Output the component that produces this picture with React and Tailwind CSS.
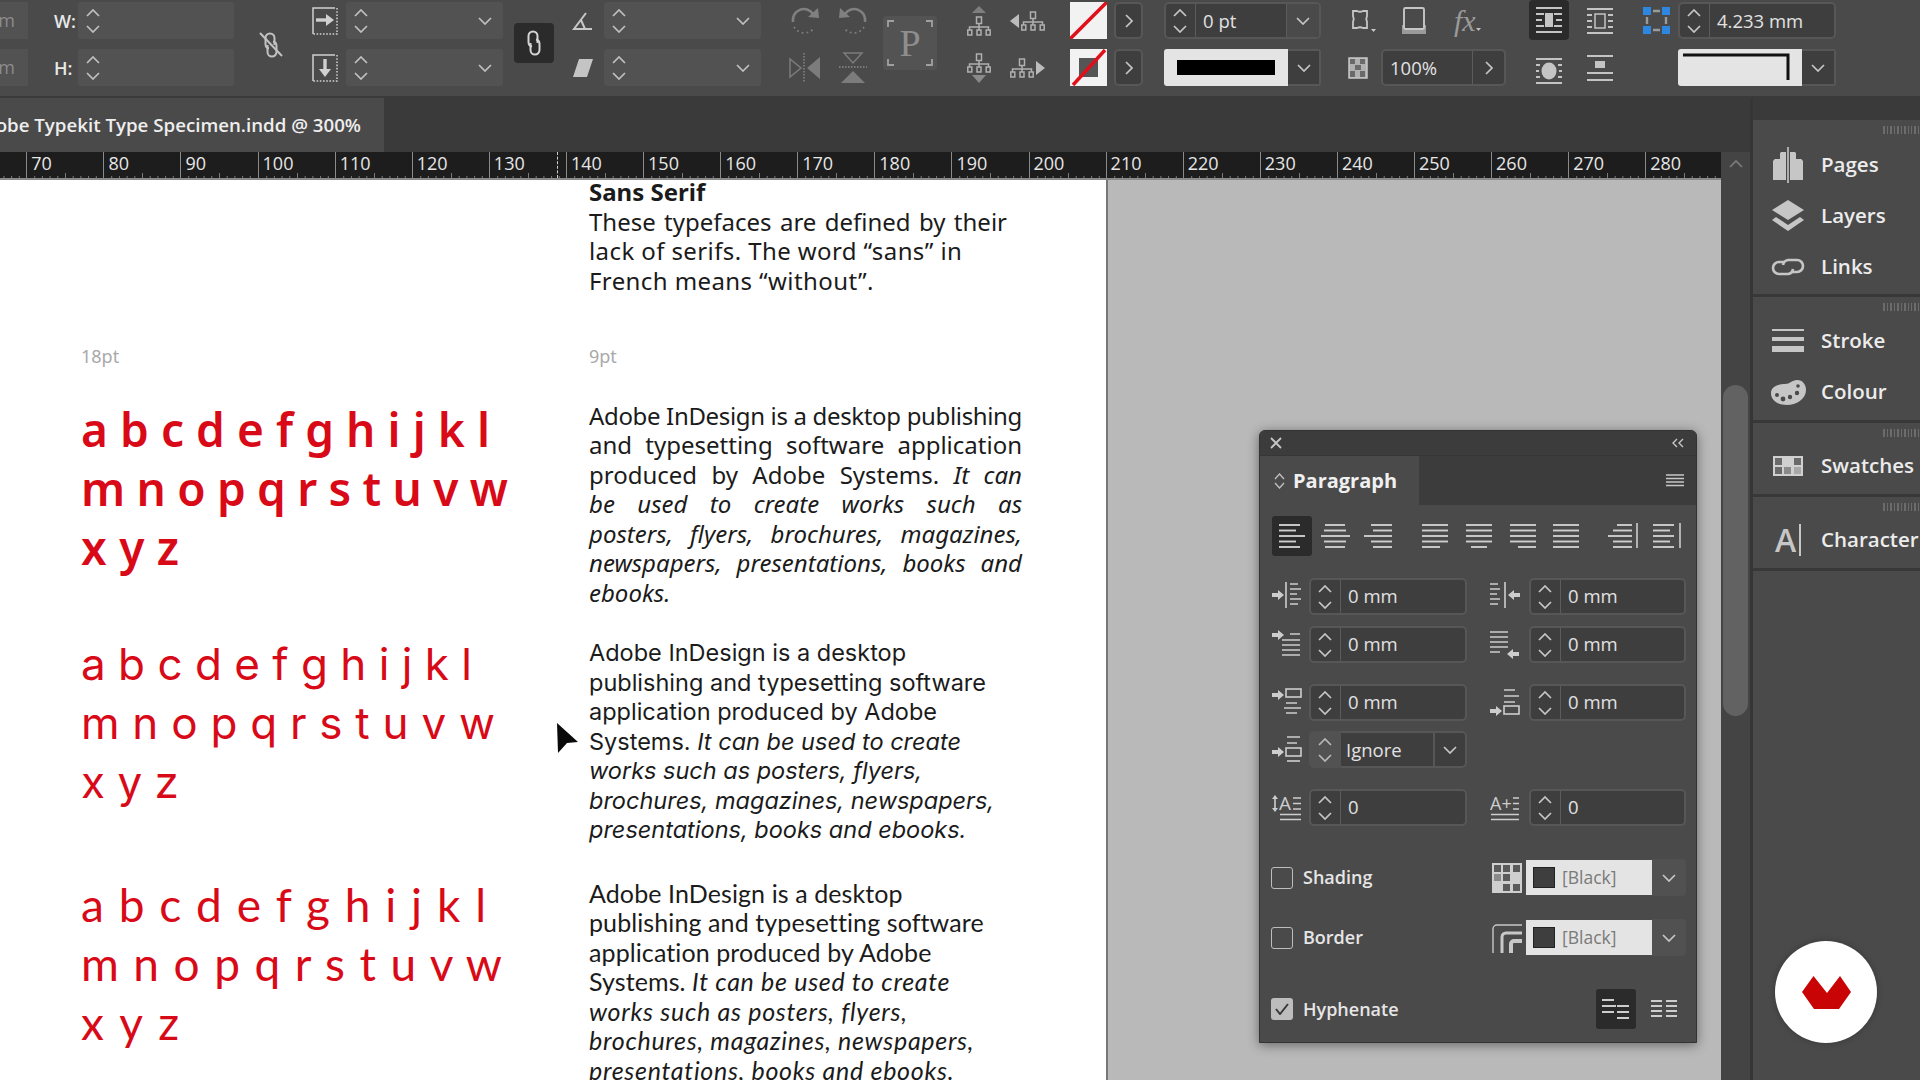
import React from "react";

const C = "#c6c6c6";
const Chev = ({ d = "down", w = 14, h = 8, c = C, sw = 1.7 }) => (
  <svg width={w} height={h} viewBox="0 0 14 8" fill="none" stroke={c} strokeWidth={sw}>
    <path d={d === "up" ? "M1 7 7 1 13 7" : "M1 1 7 7 13 1"} />
  </svg>
);
const ChevR = ({ c = C }) => (
  <svg width="8" height="14" viewBox="0 0 8 14" fill="none" stroke={c} strokeWidth="1.7"><path d="M1 1 7 7 1 13" /></svg>
);
const Stepper = ({ w = "w-[30px] pr-[2px]", c = C, line = false }) => (
  <div className={`${w} h-full shrink-0 flex flex-col items-center justify-center gap-[8px] ${line ? "border-r border-[#5c5c5c]" : ""}`}>
    <Chev d="up" c={c} />
    <Chev c={c} />
  </div>
);
const EmptyField = ({ w, drop = false, c = "#c0c0c0", text }) => (
  <div className={`${w} h-[37px] bg-[#525252] rounded-[3px] flex items-center overflow-hidden`}>
    <Stepper w="w-[30px]" c={c} />
    <div className="flex-1 text-[17px] text-[#ddd]">{text}</div>
    {drop && <div className="w-[36px] flex justify-center"><Chev c={c} /></div>}
  </div>
);
const DarkField = ({ w, value, stepper = true, drop = false, right = false, h = "h-[37px]", text = "text-[18.5px]" }) => (
  <div className={`${w} ${h} bg-[#3e3e3e] border-2 border-[#575757] rounded-[5px] flex items-center overflow-hidden shrink-0`}>
    {stepper && <Stepper line />}
    <div className={`flex-1 pl-[7px] ${text} text-[#e2e2e2] leading-none`}>{value}</div>
    {drop && <div className="w-[33px] h-full border-l border-[#5c5c5c] flex items-center justify-center bg-[#4a4a4a]"><Chev /></div>}
    {right && <div className="w-[32px] h-full border-l border-[#5c5c5c] flex items-center justify-center"><ChevR /></div>}
  </div>
);

/* toolbar drawings */
const chain1 = "M5 16.5C2.5 16 1.5 14 1.5 12V6a4.5 4.5 0 0 1 9 0v7";
const chain2 = "M9 9.5c2.5.5 3.5 2.5 3.5 4.5v6a4.5 4.5 0 0 1-9 0v-7";
const BrokenLink = () => (
  <svg width="24" height="27" viewBox="0 0 24 27" fill="none" stroke="#c2c2c2" strokeWidth="2">
    <g transform="translate(5 1)"><path d={chain1} /><path d={chain2} /></g>
    <path d="M1 2 23 25" strokeWidth="2" />
  </svg>
);
const LinkOn = () => (
  <svg width="14" height="26" viewBox="0 0 14 26" fill="none" stroke="#d4d4d4" strokeWidth="2">
    <path d={chain1} /><path d={chain2} />
  </svg>
);
const ScaleW = () => (
  <svg width="26" height="28" viewBox="0 0 26 28" fill="none" stroke="#d0d0d0" strokeWidth="1.5">
    <path d="M1 27V1h22" />
    <path d="M25 1v26H1" strokeDasharray="1.6 1.6" />
    <path d="M4 13h11" strokeWidth="3.4" /><path d="M14 7l8 6-8 6z" fill="#d0d0d0" stroke="none" />
  </svg>
);
const ScaleH = () => (
  <svg width="26" height="28" viewBox="0 0 26 28" fill="none" stroke="#d0d0d0" strokeWidth="1.5">
    <path d="M1 27V1h22" />
    <path d="M25 1v26H1" strokeDasharray="1.6 1.6" />
    <path d="M13 5v11" strokeWidth="3.4" /><path d="M7 15h12l-6 8z" fill="#d0d0d0" stroke="none" />
  </svg>
);
const Angle = () => (
  <svg width="22" height="20" viewBox="0 0 22 20" fill="none" stroke="#c8c8c8" strokeWidth="2">
    <path d="M14 2 2 18h18M9 9l4 9" />
  </svg>
);
const Shear = () => (
  <svg width="20" height="20" viewBox="0 0 20 20"><path d="M6 1h14l-6 18H0z" fill="#c4c4c4" /></svg>
);
const Rotate = ({ flip }) => (
  <svg width="30" height="30" viewBox="0 0 30 30" fill="none" style={flip ? { transform: "scaleX(-1)" } : undefined}>
    <path d="M3 16A11 11 0 0 1 23 8" stroke="#808080" strokeWidth="2.6" />
    <path d="M18 11 29 12 28 2z" fill="#808080" />
    <path d="M4 21a12 12 0 0 0 20 1" stroke="#7c7c7c" strokeWidth="1.8" strokeDasharray="1.8 3" />
  </svg>
);
const FlipH = () => (
  <svg width="32" height="30" viewBox="0 0 32 30" fill="none">
    <path d="M1 6 12 15 1 24z" stroke="#7c7c7c" strokeWidth="1.5" />
    <path d="M31 4 18 15 31 26z" fill="#7c7c7c" />
    <path d="M15 0v30" stroke="#8a8a8a" strokeWidth="1.4" strokeDasharray="1.5 1.5" />
  </svg>
);
const FlipV = () => (
  <svg width="30" height="32" viewBox="0 0 30 32" fill="none">
    <path d="M6 1h18L15 11z" stroke="#7c7c7c" strokeWidth="1.5" />
    <path d="M3 31h24L15 19z" fill="#7c7c7c" />
    <path d="M1 15h28" stroke="#8a8a8a" strokeWidth="1.4" strokeDasharray="1.5 1.5" />
  </svg>
);
const TreeG = ({ x = 0, y = 0 }) => (
  <g transform={`translate(${x} ${y})`} stroke="#b0b0b0" strokeWidth="1.5" fill="none">
    <rect x="9.5" y="1" width="5" height="6.5" />
    <path d="M12 7.5V14M2.5 14v-3h19v3" />
    <rect x="0.8" y="14" width="4" height="5" /><rect x="10" y="14" width="4" height="5" /><rect x="19.2" y="14" width="4" height="5" />
  </g>
);
const TreeUp = () => (
  <svg width="24" height="30" viewBox="0 0 24 30"><path d="M5 7 12 0l7 7z" fill="#7e7e7e" /><TreeG y={10} /></svg>
);
const TreeDown = () => (
  <svg width="24" height="30" viewBox="0 0 24 30"><TreeG /><path d="M5 22h14l-7 8z" fill="#8a8a8a" /></svg>
);
const TreeLeft = () => (
  <svg width="36" height="20" viewBox="0 0 36 20"><path d="M0 10 9 3v14z" fill="#bcbcbc" /><TreeG x={11} /></svg>
);
const TreeRight = () => (
  <svg width="36" height="20" viewBox="0 0 36 20"><TreeG /><path d="M35 10 26 3v14z" fill="#bcbcbc" /></svg>
);
const SwatchNone = () => (
  <svg width="37" height="37" viewBox="0 0 37 37">
    <rect width="37" height="37" fill="#f2f2f2" />
    <path d="M0 37 37 0" stroke="#e0101a" strokeWidth="3.5" />
  </svg>
);
const SwatchStroke = () => (
  <svg width="37" height="37" viewBox="0 0 37 37">
    <rect width="37" height="37" fill="#f2f2f2" />
    <rect x="9" y="9" width="19" height="19" fill="#555" />
    <path d="M3 36 35 1" stroke="#e0101a" strokeWidth="3.5" />
  </svg>
);
const FrameFit = () => (
  <svg width="28" height="26" viewBox="0 0 28 26" fill="none" stroke="#c6c6c6" strokeWidth="1.8">
    <path d="M5 3h4c2 1 4 1 6 0h4v5c-1 2-1 4 0 6v6h-4c-2-1-4-1-6 0H5v-6c1-2 1-4 0-6V3z" />
    <path d="M23 21h5l-2.5 3z" fill="#c6c6c6" stroke="none" />
  </svg>
);
const DropShadow = () => (
  <svg width="26" height="30" viewBox="0 0 26 30" fill="none">
    <rect x="0" y="19" width="24" height="9" fill="#9a9a9a" />
    <rect x="2" y="2" width="20" height="21" rx="1.5" fill="#4a4a4a" stroke="#c6c6c6" strokeWidth="1.9" />
  </svg>
);
const Opacity = () => (
  <svg width="20" height="22" viewBox="0 0 20 22">
    <rect x="1" y="1" width="18" height="20" fill="#b0b0b0" stroke="#c6c6c6" strokeWidth="1.5" />
    <path d="M2 2h5v5H2zM12 2h5v5h-5zM7 8h6v5H7zM2 14h5v6H2zM12 14h5v6h-5z" fill="#6a6a6a" />
  </svg>
);
const Wrap = ({ kind }) => (
  <svg width="28" height="28" viewBox="0 0 28 28" fill="none" stroke="#c4c4c4" strokeWidth="2">
    {kind === "a" && (
      <>
        <path d="M1 2h26M1 26h26M1 8h8M19 8h8M1 14h6M21 14h6M1 20h8M19 20h8" />
        <rect x="10" y="7" width="8" height="14" fill="#c4c4c4" stroke="none" />
      </>
    )}
    {kind === "b" && (
      <>
        <path d="M1 2h26M1 26h26M1 8h5M22 8h5M1 14h5M22 14h5M1 20h5M22 20h5" />
        <rect x="9" y="7" width="10" height="14" strokeWidth="1.5" />
      </>
    )}
    {kind === "c" && (
      <>
        <path d="M1 2h26M1 26h26M1 8h4M23 8h4M1 14h3M24 14h3M1 20h4M23 20h4" />
        <ellipse cx="14" cy="14" rx="7.5" ry="8.5" fill="#c4c4c4" stroke="none" />
      </>
    )}
    {kind === "d" && (
      <>
        <path d="M1 2h26M1 19h26M1 26h26" />
        <rect x="9" y="7" width="10" height="7" fill="#c4c4c4" stroke="none" />
      </>
    )}
  </svg>
);
const BlueBox = () => (
  <svg width="27" height="27" viewBox="0 0 27 27">
    <path d="M10 4h7M10 23h7M4 10v7M23 10v7" stroke="#9a9a9a" strokeWidth="2.4" fill="none" />
    <rect width="8" height="8" fill="#2d86e0" /><rect x="19" width="8" height="8" fill="#2d86e0" />
    <rect y="19" width="8" height="8" fill="#2d86e0" /><rect x="19" y="19" width="8" height="8" fill="#2d86e0" />
  </svg>
);
const Corner = () => (
  <div className="w-[158px] h-[37px] flex rounded-[3px] overflow-hidden">
    <div className="w-[124px] bg-[#e4e4e4] flex items-start justify-end">
      <svg width="124" height="37" viewBox="0 0 124 37" fill="none"><path d="M5 6H110V31" stroke="#111" strokeWidth="3" /></svg>
    </div>
    <div className="flex-1 bg-[#3e3e3e] border-2 border-l-0 border-[#575757] flex items-center justify-center"><Chev /></div>
  </div>
);
const PBox = () => (
  <div className="w-[54px] h-[54px] mt-[14px] ml-[6px] bg-[#535353] rounded-[3px] flex items-center justify-center shrink-0 relative">
    <span className="text-[38px] text-[#8e8e8e] leading-none [font-family:'Liberation_Serif',serif]">P</span>
    <svg className="absolute left-0 top-0" width="54" height="54" viewBox="0 0 54 54" fill="none" stroke="#a0a0a0" strokeWidth="1.8">
      <path d="M5 11V5h6M43 5h6v6M5 43v6h6M43 49h6v-6" />
    </svg>
  </div>
);

const Col = ({ className = "", children }) => (
  <div className={`flex flex-col gap-[10px] shrink-0 ${className}`}>{children}</div>
);
const Cell = ({ className = "", children }) => (
  <div className={`h-[37px] flex items-center justify-center ${className}`}>{children}</div>
);

const TT = "text-[18.5px] pt-[2px]";

function Toolbar() {
  return (
    <div className="h-[98px] shrink-0 bg-[#4a4a4a] border-b-2 border-[#3a3a3a] flex pt-[2px]">
      <Col className="w-[28px]">
        <div className="h-[37px] bg-[#525252] text-[#8c8c8c] text-[18px] flex items-center justify-end overflow-hidden pr-[13px]">m</div>
        <div className="h-[37px] bg-[#525252] text-[#8c8c8c] text-[18px] flex items-center justify-end overflow-hidden pr-[13px]">m</div>
      </Col>
      <Col className="w-[24px] ml-[26px] text-[18px] font-semibold text-[#e8e8e8]">
        <Cell className="justify-start! pt-[2px]">W:</Cell>
        <Cell className="justify-start! pt-[2px]">H:</Cell>
      </Col>
      <Col className="w-[156px]">
        <EmptyField w="w-[156px]" />
        <EmptyField w="w-[156px]" />
      </Col>
      <div className="w-[78px] h-[84px] flex items-center justify-center shrink-0 pr-[4px]"><BrokenLink /></div>
      <Col className="w-[34px]">
        <Cell className="pr-[8px]"><ScaleW /></Cell>
        <Cell className="pr-[8px]"><ScaleH /></Cell>
      </Col>
      <Col>
        <EmptyField w="w-[157px]" drop />
        <EmptyField w="w-[157px]" drop />
      </Col>
      <div className="w-[40px] h-[40px] mt-[21px] ml-[11px] bg-[#2b2b2b] rounded-[4px] flex items-center justify-center shrink-0"><LinkOn /></div>
      <Col className="w-[50px] pl-[8px]">
        <Cell><Angle /></Cell>
        <Cell><Shear /></Cell>
      </Col>
      <Col>
        <EmptyField w="w-[157px]" drop />
        <EmptyField w="w-[157px]" drop />
      </Col>
      <Col className="w-[48px] ml-[20px]">
        <Cell><Rotate /></Cell>
        <Cell><FlipH /></Cell>
      </Col>
      <Col className="w-[48px]">
        <Cell><Rotate flip /></Cell>
        <Cell><FlipV /></Cell>
      </Col>
      <PBox />
      <Col className="w-[40px] ml-[22px]">
        <Cell><TreeUp /></Cell>
        <Cell><TreeDown /></Cell>
      </Col>
      <Col className="w-[48px] ml-[5px]">
        <Cell><TreeLeft /></Cell>
        <Cell><TreeRight /></Cell>
      </Col>
      <Col className="w-[37px] ml-[18px]">
        <Cell><SwatchNone /></Cell>
        <Cell><SwatchStroke /></Cell>
      </Col>
      <Col className="w-[29px] ml-[7px]">
        <div className="h-[37px] bg-[#3e3e3e] border-2 border-[#575757] rounded-[5px] flex items-center justify-center"><ChevR /></div>
        <div className="h-[37px] bg-[#3e3e3e] border-2 border-[#575757] rounded-[5px] flex items-center justify-center"><ChevR /></div>
      </Col>
      <Col className="w-[157px] ml-[21px]">
        <DarkField w="w-[157px]" value="0 pt" drop text={TT} />
        <div className="h-[37px] flex rounded-[3px] overflow-hidden">
          <div className="w-[124px] bg-[#e4e4e4] flex items-center justify-center"><div className="w-[98px] h-[15px] bg-black" /></div>
          <div className="flex-1 bg-[#3e3e3e] border-2 border-l-0 border-[#575757] flex items-center justify-center"><Chev /></div>
        </div>
      </Col>
      <Col className="w-[158px] ml-[27px]">
        <div className="h-[37px] flex items-center">
          <FrameFit />
          <div className="ml-[26px]"><DropShadow /></div>
          <span className="ml-[26px] text-[30px] italic text-[#9a9a9a] [font-family:'Liberation_Serif',serif] leading-none">fx</span>
          <svg className="mt-[18px]" width="5" height="3" viewBox="0 0 5 3"><path d="M0 0h5L2.5 3z" fill="#bdbdbd" /></svg>
        </div>
        <div className="h-[37px] flex items-center">
          <Opacity />
          <div className="ml-[13px]"><DarkField w="w-[125px]" value="100%" stepper={false} right text={TT} /></div>
        </div>
      </Col>
      <Col className="w-[40px] ml-[23px] -mt-[2px] gap-[12px]!">
        <div className="h-[40px] w-[40px] bg-[#2b2b2b] rounded-[4px] flex items-center justify-center"><Wrap kind="a" /></div>
        <Cell><Wrap kind="c" /></Cell>
      </Col>
      <Col className="w-[28px] ml-[17px]">
        <Cell><Wrap kind="b" /></Cell>
        <Cell><Wrap kind="d" /></Cell>
      </Col>
      <Col className="w-[27px] ml-[29px]">
        <Cell><BlueBox /></Cell>
      </Col>
      <Col className="w-[158px] ml-[8px]">
        <DarkField w="w-[158px]" value="4.233 mm" text={TT} />
        <Corner />
      </Col>
    </div>
  );
}

const Ruler = () => {
  const nums = [];
  for (let n = 60; n <= 280; n += 10) nums.push(n);
  return (
    <div className="h-[28px] w-[1721px] shrink-0 bg-[#1d1d1d] border-b-2 border-[#8a8a8a] flex overflow-hidden relative">
      <div className="flex -ml-[50.8px] shrink-0">
        {nums.map((n) => (
          <div key={n} className="w-[77.1px] h-[26px] shrink-0 relative border-l border-[#8a8a8a]">
            <span className="block pl-[4px] text-[18px] leading-[23px] text-[#e6e6e6]">{n}</span>
            <svg className="absolute bottom-0 left-0" width="77" height="5" viewBox="0 0 77 5" stroke="#7a7a7a" strokeWidth="1">
              {[1, 2, 3, 4, 5, 6, 7, 8, 9].map((k) => (
                <path key={k} d={`M${k * 7.7} ${k === 5 ? 0 : 3}V5`} />
              ))}
            </svg>
          </div>
        ))}
      </div>
      <div className="absolute left-[557px] top-0 h-[26px] border-l border-dashed border-[#cfcfcf]" />
    </div>
  );
};

const J = ({ children, className = "" }) => (
  <div className={`h-[29.5px] leading-[29.5px] whitespace-nowrap text-justify [text-align-last:justify] ${className}`}>{children}</div>
);
const L = ({ children, className = "" }) => (
  <div className={`h-[29.5px] leading-[29.5px] whitespace-nowrap ${className}`}>{children}</div>
);
const Red = ({ children, w, className = "" }) => (
  <div className={`h-[59px] leading-[59px] whitespace-nowrap text-[#d90a18] [text-align-last:justify] ${w} ${className}`}>{children}</div>
);

function Page() {
  const notoC = "[font-family:'Noto_Sans',sans-serif] text-[24px] text-[#1b1b1b] w-[433px]";
  return (
    <div className="w-[1106px] shrink-0 bg-white flex overflow-hidden">
      <div className="w-[589px] shrink-0 pl-[81px]">
        <div className="mt-[162px] h-[29.5px] leading-[29.5px] text-[18px] text-[#a9a9a9] [font-family:'Noto_Sans',sans-serif]">18pt</div>
        <div className="mt-[28.5px] [font-family:'Noto_Sans',sans-serif] font-semibold text-[46px] [word-spacing:-2px]">
          <Red w="w-[409px]">a b c d e f g h i j k l</Red>
          <Red w="w-[427px]">m n o p q r s t u v w</Red>
          <Red w="w-[98px]">x y z</Red>
        </div>
        <div className="mt-[57.5px] [font-family:'Inter',sans-serif] text-[44px]">
          <Red w="w-[390px]">a b c d e f g h i j k l</Red>
          <Red w="w-[414px]">m n o p q r s t u v w</Red>
          <Red w="w-[94px]">x y z</Red>
        </div>
        <div className="mt-[63px] [font-family:'Lato',sans-serif] text-[46px]">
          <Red w="w-[405px]">a b c d e f g h i j k l</Red>
          <Red w="w-[421px]">m n o p q r s t u v w</Red>
          <Red w="w-[98px]">x y z</Red>
        </div>
      </div>
      <div className="flex-1 min-w-0 text-[#1b1b1b]">
        <div className={`-mt-[3px] ${notoC}`}>
          <L className="font-bold">Sans Serif</L>
          <J className="w-[418px]">These typefaces are defined by their</J>
          <L className="tracking-[0.4px]">lack of serifs. The word “sans” in</L>
          <L className="tracking-[0.4px]">French means “without”.</L>
        </div>
        <div className="mt-[47px] h-[29.5px] leading-[29.5px] text-[18px] text-[#a9a9a9] [font-family:'Noto_Sans',sans-serif]">9pt</div>
        <div className={`mt-[29px] ${notoC}`}>
          <J className="tracking-[-0.35px]">Adobe InDesign is a desktop publishing</J>
          <J>and typesetting software application</J>
          <J>produced by Adobe Systems. <i>It can</i></J>
          <J className="italic">be used to create works such as</J>
          <J className="italic">posters, flyers, brochures, magazines,</J>
          <J className="italic">newspapers, presentations, books and</J>
          <L className="italic">ebooks.</L>
        </div>
        <div className="mt-[31px] [font-family:'Inter',sans-serif] text-[23.5px]">
          <L>Adobe InDesign is a desktop</L>
          <L>publishing and typesetting software</L>
          <L>application produced by Adobe</L>
          <L>Systems. <i>It can be used to create</i></L>
          <L className="italic">works such as posters, flyers,</L>
          <L className="italic">brochures, magazines, newspapers,</L>
          <L className="italic">presentations, books and ebooks.</L>
        </div>
        <div className="mt-[34px] [font-family:'Lato',sans-serif] text-[25px] tracking-[0.1px]">
          <L>Adobe InDesign is a desktop</L>
          <L>publishing and typesetting software</L>
          <L>application produced by Adobe</L>
          <L>Systems. <i className="tracking-[0.7px]">It can be used to create</i></L>
          <L className="italic tracking-[0.7px]">works such as posters, flyers,</L>
          <L className="italic tracking-[0.7px]">brochures, magazines, newspapers,</L>
          <L className="italic tracking-[0.7px]">presentations, books and ebooks.</L>
        </div>
      </div>
    </div>
  );
}

/* dock icons */
const IPages = () => (
  <svg width="32" height="36" viewBox="0 0 32 36">
    <path d="M1 14 9 5h5v28H1zM31 14 23 5h-5v28h13z" fill="#c6c6c6" />
    <path d="M1 12 8 5v7zM31 12l-7-7v7z" fill="#4a4a4a" />
    <path d="M16 0v36" stroke="#c6c6c6" strokeWidth="1.6" />
  </svg>
);
const ILayers = () => (
  <svg width="32" height="32" viewBox="0 0 32 32">
    <path d="M16 0 32 10 16 20 0 10z" fill="#c6c6c6" />
    <path d="M4 17l12 8 12-8 4 3-16 11L0 20z" fill="#c6c6c6" />
  </svg>
);
const ILinks = () => (
  <svg width="36" height="18" viewBox="0 0 36 18" fill="none" stroke="#c6c6c6" strokeWidth="2.6">
    <path d="M14 4H9a6 6 0 0 0 0 12h9a6 6 0 0 0 5-5" />
    <path d="M22 14h5a6 6 0 0 0 0-12h-9a6 6 0 0 0-5 5" />
  </svg>
);
const IStroke = () => (
  <svg width="32" height="24" viewBox="0 0 32 24" fill="#c6c6c6">
    <rect y="0" width="32" height="2" /><rect y="8" width="32" height="4" /><rect y="17" width="32" height="6" />
  </svg>
);
const IColour = () => (
  <svg width="36" height="26" viewBox="0 0 36 26">
    <path d="M1 14C1 7 10 5 15 5c5 0 7-4 12-4 6 0 9 5 9 10 0 9-10 15-19 15C7 26 1 21 1 14z" fill="#c6c6c6" />
    <circle cx="7" cy="16" r="2" fill="#4a4a4a" /><circle cx="13" cy="20" r="2.4" fill="#4a4a4a" /><circle cx="20" cy="18" r="2.2" fill="#4a4a4a" />
    <circle cx="27" cy="14" r="2.2" fill="#4a4a4a" /><circle cx="28" cy="7" r="1.8" fill="#4a4a4a" />
  </svg>
);
const ISwatches = () => (
  <svg width="30" height="20" viewBox="0 0 30 20">
    <rect width="30" height="20" fill="#d0d0d0" />
    <rect x="2" y="2" width="7" height="7" fill="#6a6a6a" /><rect x="21" y="2" width="7" height="7" fill="#6a6a6a" />
    <rect x="2" y="11" width="7" height="7" fill="#6a6a6a" /><rect x="11" y="11" width="7" height="7" fill="#8a8a8a" /><rect x="21" y="11" width="7" height="7" fill="#a8a8a8" />
  </svg>
);
const IChar = () => (
  <div className="flex items-center gap-[3px]">
    <span className="text-[32px] leading-none font-semibold text-[#c6c6c6]">A</span>
    <span className="w-[2px] h-[32px] bg-[#c6c6c6]" />
  </div>
);

const DockRow = ({ icon, label }) => (
  <div className="h-[51px] flex items-center">
    <div className="w-[38px] flex justify-center ml-[16px]">{icon}</div>
    <span className="ml-[14px] text-[20.5px] font-semibold text-[#ececec] whitespace-nowrap">{label}</span>
  </div>
);
const DockGroup = ({ pt, h, children }) => (
  <div className={`${pt} ${h} bg-[#4a4a4a] border-b-[3px] border-[#383838] relative shrink-0`}>
    <div className="absolute right-0 top-[6px] w-[37px] h-[8px] bg-[repeating-linear-gradient(90deg,#6c6c6c_0_1.5px,transparent_1.5px_3.5px)]" />
    {children}
  </div>
);
function Dock() {
  return (
    <div className="flex-1 min-w-0 flex flex-col border-l-[3px] border-[#363636]">
      <div className="h-[22px] shrink-0 bg-[#3a3a3a]" />
      <DockGroup pt="pt-[19px]" h="h-[177px]">
        <DockRow icon={<IPages />} label="Pages" />
        <DockRow icon={<ILayers />} label="Layers" />
        <DockRow icon={<ILinks />} label="Links" />
      </DockGroup>
      <DockGroup pt="pt-[18px]" h="h-[126px]">
        <DockRow icon={<IStroke />} label="Stroke" />
        <DockRow icon={<IColour />} label="Colour" />
      </DockGroup>
      <DockGroup pt="pt-[17px]" h="h-[74px]">
        <DockRow icon={<ISwatches />} label="Swatches" />
      </DockGroup>
      <DockGroup pt="pt-[17px]" h="h-[74px]">
        <DockRow icon={<IChar />} label="Character" />
      </DockGroup>
      <div className="flex-1 bg-[#4a4a4a]" />
    </div>
  );
}

/* paragraph panel */
const AlignI = ({ rows, bar }) => (
  <svg width="32" height="26" viewBox="0 0 32 26" stroke="#cdcdcd" strokeWidth="1.9" fill="none">
    {rows.map((r, i) => (
      <path key={i} d={`M${r[0]} ${2 + i * 5.5}H${r[1]}`} />
    ))}
    {bar && <path d="M30 0V25" strokeWidth="1.6" />}
  </svg>
);
const aligns = [
  { rows: [[3, 24], [3, 20], [3, 29], [3, 20], [3, 24]], on: true },
  { rows: [[6, 26], [5, 27], [2, 31], [5, 27], [6, 26]] },
  { rows: [[8, 29], [10, 29], [1, 29], [8, 29], [10, 29]] },
  { rows: [[3, 29], [3, 29], [3, 29], [3, 29], [3, 21]] },
  { rows: [[3, 29], [3, 29], [3, 29], [3, 29], [8, 24]] },
  { rows: [[3, 29], [3, 29], [3, 29], [3, 29], [11, 29]] },
  { rows: [[3, 29], [3, 29], [3, 29], [3, 29], [3, 29]] },
  { rows: [[10, 25], [6, 25], [1, 25], [6, 25], [6, 25]], bar: true },
  { rows: [[3, 24], [3, 20], [3, 24], [3, 20], [3, 24]], bar: true },
];
const alignMl = ["", "ml-[3px]", "ml-[4px]", "ml-[16px]", "ml-[4px]", "ml-[4px]", "ml-[3px]", "ml-[17px]", "ml-[3px]"];

const Arrow = ({ x, y, rev }) => (
  <path d={rev ? `M${x} ${y}l6-5v3h6v4h-6v3z` : `M${x} ${y - 2}h6v-3l6 5-6 5v-3h-6z`} fill="#cdcdcd" stroke="none" />
);
const Ind = ({ k }) => {
  const g = {
    a: <><Arrow x={0} y={13} /><path d="M14 0v26" /><path d="M18 2h8M18 7h11M18 12h7M18 17h11M18 22h8" /></>,
    b: <><path d="M0 2h8M0 7h10M0 12h7M0 17h10M0 22h8" /><path d="M15 0v26" /><Arrow x={18} y={13} rev /></>,
    c: <><Arrow x={0} y={5} /><path d="M18 4h10M10 10h18M10 15h18M10 20h18M10 25h18" /></>,
    d: <><path d="M0 2h18M0 7h18M0 12h18M0 17h18M0 22h10" /><Arrow x={17} y={24} rev /></>,
    e: <><Arrow x={0} y={7} /><rect x="14" y="1" width="15" height="8" /><path d="M14 15h11M12 20h17M14 25h11" /></>,
    f: <><path d="M14 2h11M14 8h15M14 14h11" /><Arrow x={0} y={23} /><rect x="14" y="18" width="15" height="8" /></>,
    g: <><path d="M15 2h13M15 8h10" /><Arrow x={0} y={17} /><rect x="14" y="13" width="15" height="8" /><path d="M15 26h13" /></>,
  }[k];
  return <svg width="30" height="30" viewBox="0 0 30 30" stroke="#cdcdcd" strokeWidth="1.6" fill="none">{g}</svg>;
};
const DropAbove = () => (
  <svg width="30" height="26" viewBox="0 0 30 26" fill="#cdcdcd">
    <path d="M3 3v11" stroke="#cdcdcd" strokeWidth="1.6" />
    <path d="M3 0 6 4H0zM3 17l3-4H0z" />
    <text x="7" y="15" fontSize="19" fontFamily="'Open Sans', sans-serif">A</text>
    <path d="M21 3h8M21 8.5h8M21 14h8M8 19.5h21M8 24.5h21" stroke="#cdcdcd" strokeWidth="1.5" fill="none" />
  </svg>
);
const DropBelow = () => (
  <svg width="30" height="26" viewBox="0 0 30 26" fill="#cdcdcd">
    <text x="0" y="15" fontSize="18" fontFamily="'Open Sans', sans-serif">A+</text>
    <path d="M23 3h6M23 8.5h6M23 14h6M1 19.5h28M1 24.5h28" stroke="#cdcdcd" strokeWidth="1.5" fill="none" />
  </svg>
);

const PRow = ({ mt, li, lv, ri, rv }) => (
  <div className={`${mt} flex items-center pl-[12px] shrink-0`}>
    <div className="w-[37px] h-[37px] flex items-center">{li}</div>
    <DarkField w="w-[158px]" value={lv} />
    <div className="w-[23px]" />
    <div className="w-[39px] h-[37px] flex items-center">{ri}</div>
    <DarkField w="w-[157px]" value={rv} />
  </div>
);
const ColorRow = ({ mt, label, icon }) => (
  <div className={`${mt} h-[35px] flex items-center pl-[11px] shrink-0`}>
    <div className="w-[22px] h-[22px] border-[1.5px] border-[#bdbdbd] rounded-[3px] shrink-0" />
    <span className="ml-[10px] w-[189px] text-[18px] font-semibold text-[#e6e6e6]">{label}</span>
    <div className="w-[30px] h-[30px] mr-[4px] shrink-0">{icon}</div>
    <div className="w-[126px] h-[35px] bg-[#e4e4e4] flex items-center shrink-0">
      <div className="w-[22px] h-[21px] ml-[7px] bg-[#3e3e3e] border border-[#222]" />
      <span className="ml-[7px] text-[17.5px] text-[#7a7a7a]">[Black]</span>
    </div>
    <div className="w-[34px] h-[37px] bg-[#515151] rounded-r-[4px] flex items-center justify-center shrink-0"><Chev /></div>
  </div>
);
const Swatches2 = () => (
  <svg width="30" height="30" viewBox="0 0 30 30">
    <rect width="30" height="30" fill="#cfcfcf" />
    <path d="M2 2h7v7H2zM11 2h7v7h-7zM21 2h7v7h-7zM11 11h7v7h-7zM11 21h7v7h-7zM21 21h7v7h-7z" fill="#5a5a5a" />
    <path d="M2 11h7v7H2z" fill="#8a8a8a" />
  </svg>
);
const BorderI = () => (
  <svg width="30" height="30" viewBox="0 0 30 30" fill="none" stroke="#c8c8c8">
    <path d="M1 30V6a4 4 0 0 1 4-4h25" strokeWidth="1.4" />
    <path d="M10 30V14a4 4 0 0 1 4-4h16" strokeWidth="3" />
    <path d="M19 30V21a3 3 0 0 1 3-3h8" strokeWidth="4" />
  </svg>
);

function ParagraphPanel() {
  return (
    <div className="absolute left-[1259px] top-[430px] w-[438px] h-[613px] flex flex-col bg-[#4a4a4a] rounded-t-[6px] shadow-[0_2px_12px_rgba(0,0,0,0.45)] border border-[#333] overflow-hidden">
      <div className="h-[25px] shrink-0 bg-[#3c3c3c] flex items-center justify-between px-[10px] border-b border-[#363636]">
        <svg width="12" height="12" viewBox="0 0 12 12" stroke="#c6c6c6" strokeWidth="1.8"><path d="M1 1l10 10M11 1 1 11" /></svg>
        <svg className="mr-[1px]" width="14" height="10" viewBox="0 0 14 10" fill="none" stroke="#c6c6c6" strokeWidth="1.4"><path d="M6 1 2 5l4 4M12 1 8 5l4 4" /></svg>
      </div>
      <div className="h-[49px] shrink-0 bg-[#3c3c3c] flex">
        <div className="w-[159px] bg-[#4a4a4a] flex items-center pl-[14px]">
          <svg width="11" height="16" viewBox="0 0 11 16" fill="none" stroke="#bdbdbd" strokeWidth="1.4"><path d="M1 6l4.5-5L10 6M1 10l4.5 5L10 10" /></svg>
          <span className="ml-[8px] text-[20px] font-bold text-[#f0f0f0]">Paragraph</span>
        </div>
        <div className="flex-1 flex items-center justify-end pr-[11px]">
          <svg width="20" height="14" viewBox="0 0 20 14" stroke="#c6c6c6" strokeWidth="1.6"><path d="M1 1h18M1 4.5h18M1 8h18M1 11.5h18" /></svg>
        </div>
      </div>
      <div className="flex mt-[11px] pl-[12px] shrink-0">
        {aligns.map((a, i) => (
          <div key={i} className={`w-[40px] h-[40px] rounded-[3px] flex items-center justify-center ${alignMl[i]} ${a.on ? "bg-[#2b2b2b]" : ""}`}>
            <AlignI rows={a.rows} bar={a.bar} />
          </div>
        ))}
      </div>
      <PRow mt="mt-[22px]" li={<Ind k="a" />} lv="0 mm" ri={<Ind k="b" />} rv="0 mm" />
      <PRow mt="mt-[11px]" li={<Ind k="c" />} lv="0 mm" ri={<Ind k="d" />} rv="0 mm" />
      <PRow mt="mt-[21px]" li={<Ind k="e" />} lv="0 mm" ri={<Ind k="f" />} rv="0 mm" />
      <div className="mt-[10px] h-[37px] flex items-center pl-[12px] shrink-0">
        <div className="w-[37px] flex items-center"><Ind k="g" /></div>
        <div className="w-[158px] h-[37px] flex rounded-[5px] overflow-hidden">
          <div className="w-[32px] bg-[#525252]"><Stepper w="w-[32px]" c="#b8b8b8" /></div>
          <div className="flex-1 bg-[#3e3e3e] border-y-2 border-[#575757] pl-[5px] flex items-center text-[18.5px] text-[#e2e2e2]">Ignore</div>
          <div className="w-[34px] bg-[#3e3e3e] border-2 border-[#575757] rounded-r-[5px] flex items-center justify-center"><Chev /></div>
        </div>
      </div>
      <PRow mt="mt-[21px]" li={<DropAbove />} lv="0" ri={<DropBelow />} rv="0" />
      <ColorRow mt="mt-[34px]" label="Shading" icon={<Swatches2 />} />
      <ColorRow mt="mt-[25px]" label="Border" icon={<BorderI />} />
      <div className="mt-[34px] h-[40px] flex items-center pl-[11px] shrink-0">
        <div className="w-[22px] h-[22px] bg-[#bdbdbd] rounded-[3px] flex items-center justify-center shrink-0">
          <svg width="14" height="12" viewBox="0 0 14 12" fill="none" stroke="#3a3a3a" strokeWidth="2"><path d="M1 6l4 5 8-10" /></svg>
        </div>
        <span className="ml-[10px] w-[293px] text-[18px] font-semibold text-[#e6e6e6]">Hyphenate</span>
        <div className="w-[40px] h-[40px] bg-[#2b2b2b] rounded-[3px] flex items-center justify-center shrink-0">
          <svg width="30" height="26" viewBox="0 0 30 26" stroke="#cdcdcd" strokeWidth="1.8"><path d="M1 4h12M1 10h14M1 16h12M16 10h12M16 16h12M16 22h12" /></svg>
        </div>
        <div className="w-[28px] ml-[14px] shrink-0">
          <svg width="28" height="20" viewBox="0 0 28 20" stroke="#cdcdcd" strokeWidth="1.8"><path d="M1 2h11M1 7h11M1 12h11M1 17h11M16 2h11M16 7h11M16 12h11M16 17h11" /></svg>
        </div>
      </div>
    </div>
  );
}

export default function App() {
  return (
    <div className="relative w-[1920px] h-[1080px] overflow-hidden flex flex-col bg-[#4a4a4a] [font-family:'Open_Sans',sans-serif]">
      <Toolbar />
      <div className="flex-1 min-h-0 flex">
        <div className="w-[1750px] shrink-0 flex flex-col">
          <div className="h-[54px] shrink-0 bg-[#3a3a3a]">
            <div className="w-[384px] h-full bg-[#4a4a4a] overflow-hidden flex items-center justify-end pr-[23px]">
              <span className="text-[18.7px] font-semibold text-[#eeeeee] whitespace-nowrap">Adobe Typekit Type Specimen.indd @ 300%</span>
            </div>
          </div>
          <div className="flex-1 min-h-0 flex">
            <div className="w-[1721px] shrink-0 flex flex-col">
              <Ruler />
              <div className="flex-1 min-h-0 flex">
                <Page />
                <div className="flex-1 bg-[#b9b9b9] border-l-2 border-[#777]" />
              </div>
            </div>
            <div className="flex-1 bg-[#444444] flex flex-col">
              <div className="h-[22px] flex items-center justify-center shrink-0 pt-[2px]"><Chev d="up" c="#7c7c7c" /></div>
              <div className="mt-[211px] ml-[2px] w-[25px] h-[331px] bg-[#626262] rounded-full" />
            </div>
          </div>
        </div>
        <Dock />
      </div>
      <ParagraphPanel />
      <svg className="absolute left-[557px] top-[723px]" width="22" height="31" viewBox="0 0 22 31">
        <path d="M0 0 21 19 10 20 1 30z" fill="#0a0a0a" />
      </svg>
      <div className="absolute left-[1775px] top-[941px] w-[102px] h-[102px] rounded-full bg-white shadow-[0_0_6px_rgba(0,0,0,0.25)] flex items-center justify-center">
        <svg width="49" height="33" viewBox="0 0 49 33"><path d="M0 16 11.5 0 25 17 38 0 49 16 37 33H12z" fill="#c90404" /></svg>
      </div>
    </div>
  );
}
